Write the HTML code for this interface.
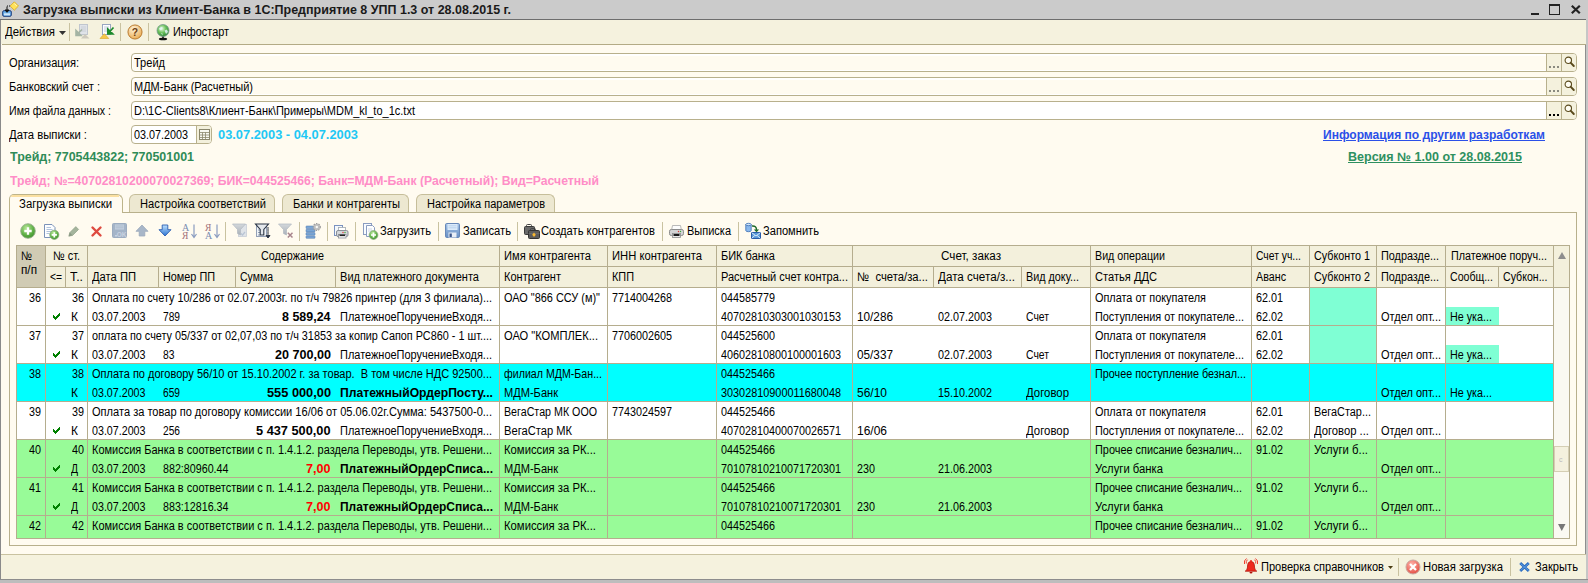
<!DOCTYPE html>
<html><head><meta charset="utf-8"><title>1C</title>
<style>
html,body{margin:0;padding:0;}
body{width:1588px;height:583px;overflow:hidden;position:relative;background:#fffbf0;font-family:"Liberation Sans",sans-serif;font-size:11px;color:#000;}
div{position:absolute;box-sizing:border-box;}
svg{position:absolute;overflow:visible;}
.t{position:absolute;white-space:pre;line-height:15px;height:15px;font-size:12.5px;transform-origin:0 50%;}
</style></head><body>
<div style="left:0px;top:0px;width:1588px;height:20px;background:#cbcbcb;"></div>
<div style="left:0px;top:19px;width:1586px;height:1px;background:#6e6e6e;"></div>
<div style="left:0px;top:20px;width:1px;height:563px;background:#8a8a8a;"></div>
<div style="left:1585px;top:20px;width:3px;height:563px;background:#c6c6c6;"></div>
<div style="left:1585px;top:20px;width:1px;height:560px;background:#8e8e8e;"></div>
<div style="left:0px;top:579px;width:1588px;height:4px;background:#bdbdbd;"></div>
<div style="left:0px;top:579px;width:1588px;height:1px;background:#8d8d8d;"></div>
<span class="t" style="top:2px;left:22.5px;color:#1a1a1a;font-weight:bold;font-size:13.5px;transform:scaleX(0.9245);">Загрузка выписки из Клиент-Банка в 1С:Предприятие 8 УПП 1.3 от 28.08.2015 г.</span>
<div style="left:1531px;top:13px;width:8px;height:2px;background:#222;"></div>
<div style="left:1549px;top:4px;width:11px;height:11px;border:1px solid #222;border-top:2px solid #222;"></div>
<svg style="left:1570px;top:4px" width="11" height="11" viewBox="0 0 11 11"><path d="M1.800 1.800L9.800 9.300M9.800 1.800L1.800 9.300" stroke="#222" stroke-width="2.2" fill="none"/></svg>
<svg style="left:2px;top:1px" width="17" height="17" viewBox="0 0 17 17"><rect x=".7" y="9.700" width="8.600" height="5.600" rx="1.300" fill="#6ab0ec" stroke="#1c3c7c" stroke-width="1"/><rect x="2" y="12.300" width="6" height="2" fill="#cfe6fa"/><path d="M5 5.500v5M3 9l2 2.300L7 9z" stroke="#111" stroke-width="1" fill="#111"/><path d="M5 5h4" stroke="#111" stroke-width="1" stroke-dasharray="1 1"/><path d="M12.300 .8l4.200 4.200-4.200 4.200L8.100 5z" fill="#ffe25a" stroke="#d8a820" stroke-width=".8"/><path d="M12.300 2.500l2.500 2.500" stroke="#fff8c0" stroke-width="1"/></svg>
<div style="left:1px;top:20px;width:1585px;height:24px;background:#f5f2de;"></div>
<div style="left:2px;top:44px;width:1584px;height:1px;background:#b3ab86;"></div>
<span class="t" style="top:25px;left:5px;transform:scaleX(0.9127);">Действия</span>
<svg style="left:59px;top:31px" width="7" height="4"><path d="M0 0h7L3.5 4z" fill="#333"/></svg>
<div style="left:69px;top:23px;width:1px;height:18px;background:#c9c2a0;"></div>
<div style="left:120px;top:23px;width:1px;height:18px;background:#c9c2a0;"></div>
<div style="left:148px;top:23px;width:1px;height:18px;background:#c9c2a0;"></div>
<svg style="left:75px;top:24px" width="17" height="16" viewBox="0 0 17 16"><rect x="4.500" y=".5" width="8" height="10" fill="#dfe3e8" stroke="#c0c6ce"/><path d="M6 3h5M6 5h5M6 7h5" stroke="#c4cad2" stroke-width=".8"/><path d="M7 5.500L2 10.500M1 6.500v5h5z" stroke="#a4b4a4" stroke-width="1.600" fill="#a4b4a4"/><path d="M6 14.500l4-4.500 4.500 4.500z" fill="#cdc9bc"/></svg>
<svg style="left:99px;top:24px" width="17" height="16" viewBox="0 0 17 16"><rect x="3.500" y=".5" width="8" height="10" fill="#fdfeff" stroke="#98a6c0"/><path d="M5 3h5M5 5h5M5 7h3" stroke="#b4c0d4" stroke-width=".8"/><path d="M14.500 3.500L10 8.500M8.800 5v5h5z" stroke="#1c8a2c" stroke-width="1.700" fill="#1c8a2c"/><path d="M1 14.500l4.300-4.800 4.500 4.800z" fill="#f6c84a" stroke="#d8a428" stroke-width=".6"/></svg>
<svg style="left:127px;top:24px" width="16" height="16" viewBox="0 0 17 17"><defs><radialGradient id="qg" cx=".4" cy=".3" r=".8"><stop offset="0" stop-color="#fff3d8"/><stop offset="1" stop-color="#e8a445"/></radialGradient></defs><circle cx="8.5" cy="8.5" r="7.5" fill="url(#qg)" stroke="#b5752a"/><text x="8.5" y="12.500" font-size="11" font-weight="bold" text-anchor="middle" fill="#6b3d10" font-family="Liberation Sans">?</text></svg>
<svg style="left:156px;top:24px" width="14" height="17" viewBox="0 0 14 17"><defs><radialGradient id="gl" cx=".4" cy=".35" r=".7"><stop offset="0" stop-color="#e8f8e0"/><stop offset=".5" stop-color="#68c058"/><stop offset="1" stop-color="#2c8434"/></radialGradient></defs><ellipse cx="7" cy="15" rx="4.200" ry="1.300" fill="#111"/><path d="M7 12v3" stroke="#111" stroke-width="1.500"/><circle cx="7" cy="6.500" r="6" fill="url(#gl)" stroke="#7a9a90" stroke-width=".8"/><path d="M3 4.500q1.500-2 3.500-1.500l-.5 2.500-2 1zM8.500 6.500l2.500-1 1 2.500-2 2zM5 9l1.500.5v2z" fill="#e4f4fc" opacity=".85"/></svg>
<span class="t" style="top:25px;left:173px;transform:scaleX(0.8705);">Инфостарт</span>
<div style="left:131px;top:53px;width:1446px;height:19px;background:#fffbf0;border:1px solid #b8b08c;border-radius:4px;box-shadow:inset 0 0 0 1px #fff,inset 0 2px 0 0 #fff;"></div>
<span class="t" style="top:56px;left:134px;transform:scaleX(0.8826);">Трейд</span>
<span class="t" style="top:56px;left:9px;transform:scaleX(0.8875);">Организация:</span>
<div style="left:1547px;top:54px;width:29px;height:17px;background:#f4f1dd;border-radius:0 3px 3px 0;"></div>
<div style="left:1546px;top:54px;width:1px;height:17px;background:#b8b08c;"></div>
<div style="left:1561px;top:54px;width:1px;height:17px;background:#b8b08c;"></div>
<div style="left:1549px;top:66px;width:2px;height:2px;background:#8a8a80;"></div>
<div style="left:1553px;top:66px;width:2px;height:2px;background:#8a8a80;"></div>
<div style="left:1557px;top:66px;width:2px;height:2px;background:#8a8a80;"></div>
<svg style="left:1564px;top:56px" width="11" height="12" viewBox="0 0 11 12"><circle cx="4.300" cy="4.300" r="3.200" fill="#fffef4" stroke="#5a4a1c" stroke-width="1.100"/><path d="M6.800 6.800l3 3.200" stroke="#5a4a1c" stroke-width="1.900" stroke-linecap="round"/></svg>
<div style="left:131px;top:77px;width:1446px;height:19px;background:#fffbf0;border:1px solid #b8b08c;border-radius:4px;box-shadow:inset 0 0 0 1px #fff,inset 0 2px 0 0 #fff;"></div>
<span class="t" style="top:80px;left:134px;transform:scaleX(0.8787);">МДМ-Банк (Расчетный)</span>
<span class="t" style="top:80px;left:9px;transform:scaleX(0.8912);">Банковский счет :</span>
<div style="left:1547px;top:78px;width:29px;height:17px;background:#f4f1dd;border-radius:0 3px 3px 0;"></div>
<div style="left:1546px;top:78px;width:1px;height:17px;background:#b8b08c;"></div>
<div style="left:1561px;top:78px;width:1px;height:17px;background:#b8b08c;"></div>
<div style="left:1549px;top:90px;width:2px;height:2px;background:#8a8a80;"></div>
<div style="left:1553px;top:90px;width:2px;height:2px;background:#8a8a80;"></div>
<div style="left:1557px;top:90px;width:2px;height:2px;background:#8a8a80;"></div>
<svg style="left:1564px;top:80px" width="11" height="12" viewBox="0 0 11 12"><circle cx="4.300" cy="4.300" r="3.200" fill="#fffef4" stroke="#5a4a1c" stroke-width="1.100"/><path d="M6.800 6.800l3 3.200" stroke="#5a4a1c" stroke-width="1.900" stroke-linecap="round"/></svg>
<div style="left:131px;top:101px;width:1446px;height:19px;background:#fff;border:1px solid #b8b08c;border-radius:4px;box-shadow:inset 0 0 0 1px #fff,inset 0 2px 0 0 #fff;"></div>
<span class="t" style="top:104px;left:134px;transform:scaleX(0.8810);">D:\1C-Clients8\Клиент-Банк\Примеры\MDM_kl_to_1c.txt</span>
<span class="t" style="top:104px;left:9px;transform:scaleX(0.8500);">Имя файла данных :</span>
<div style="left:1547px;top:102px;width:29px;height:17px;background:#f4f1dd;border-radius:0 3px 3px 0;"></div>
<div style="left:1546px;top:102px;width:1px;height:17px;background:#b8b08c;"></div>
<div style="left:1561px;top:102px;width:1px;height:17px;background:#b8b08c;"></div>
<div style="left:1549px;top:114px;width:2px;height:2px;background:#000;"></div>
<div style="left:1553px;top:114px;width:2px;height:2px;background:#000;"></div>
<div style="left:1557px;top:114px;width:2px;height:2px;background:#000;"></div>
<svg style="left:1564px;top:104px" width="11" height="12" viewBox="0 0 11 12"><circle cx="4.300" cy="4.300" r="3.200" fill="#fffef4" stroke="#5a4a1c" stroke-width="1.100"/><path d="M6.800 6.800l3 3.200" stroke="#5a4a1c" stroke-width="1.900" stroke-linecap="round"/></svg>
<div style="left:131px;top:125px;width:81px;height:19px;background:#fff;border:1px solid #b8b08c;border-radius:4px;box-shadow:inset 0 0 0 1px #fff,inset 0 2px 0 0 #fff;"></div>
<span class="t" style="top:128px;left:134px;transform:scaleX(0.8631);">03.07.2003</span>
<span class="t" style="top:128px;left:9px;transform:scaleX(0.9050);">Дата выписки :</span>
<div style="left:196px;top:126px;width:1px;height:17px;background:#b8b08c;"></div>
<div style="left:197px;top:126px;width:14px;height:17px;background:#f3f0dc;border-radius:0 3px 3px 0;"></div>
<svg style="left:199px;top:129px" width="11" height="11" viewBox="0 0 11 11"><rect x=".5" y=".5" width="10" height="10" fill="#f8f8f0" stroke="#8a866c"/><path d="M.5 3.500h10M.5 6h10M.5 8.500h10M3.500 3.500v7M6.500 3.500v7" stroke="#8a866c" stroke-width=".8"/></svg>
<span class="t" style="top:127px;left:218px;color:#1ec8f5;font-weight:bold;font-size:13px;transform:scaleX(0.9881);">03.07.2003 - 04.07.2003</span>
<span class="t" style="top:150px;left:10px;color:#2e8b57;font-weight:bold;font-size:12px;transform:scaleX(1.0375);">Трейд; 7705443822; 770501001</span>
<span class="t" style="top:173.7px;left:10px;color:#ff8dc7;font-weight:bold;font-size:12px;transform:scaleX(1.0163);height:13.500px;overflow:hidden;">Трейд; №=40702810200070027369; БИК=044525466; Банк=МДМ-Банк (Расчетный); Вид=Расчетный</span>
<span class="t" style="top:128px;left:1323px;color:#2b50e8;font-weight:bold;font-size:12px;text-decoration:underline;transform:scaleX(1.0038);">Информация по другим разработкам</span>
<span class="t" style="top:150px;left:1348px;color:#2e9060;font-weight:bold;font-size:12px;text-decoration:underline;transform:scaleX(1.0434);">Версия № 1.00 от 28.08.2015</span>
<div style="left:9px;top:212px;width:1568px;height:334px;border:1px solid #b8b08c;"></div>
<div style="left:129px;top:194px;width:146px;height:18px;background:#ede8d1;border:1px solid #c6be9a;border-bottom:none;border-radius:6px 6px 0 0;"></div>
<span class="t" style="top:197px;left:139.5px;transform:scaleX(0.8875);">Настройка соответствий</span>
<div style="left:282px;top:194px;width:127px;height:18px;background:#ede8d1;border:1px solid #c6be9a;border-bottom:none;border-radius:6px 6px 0 0;"></div>
<span class="t" style="top:197px;left:292.5px;transform:scaleX(0.8888);">Банки и контрагенты</span>
<div style="left:416px;top:194px;width:139px;height:18px;background:#ede8d1;border:1px solid #c6be9a;border-bottom:none;border-radius:6px 6px 0 0;"></div>
<span class="t" style="top:197px;left:426.5px;transform:scaleX(0.8803);">Настройка параметров</span>
<div style="left:9px;top:194px;width:114px;height:19px;background:#fffbf0;border:1px solid #bdb48a;border-bottom:none;border-radius:5px 6px 0 0;"></div>
<div style="left:11px;top:195px;width:108px;height:2px;background:#fbe0a2;border-radius:3px 0 0 0;"></div>
<span class="t" style="top:197px;left:19px;transform:scaleX(0.9108);">Загрузка выписки</span>
<div style="left:225px;top:222px;width:1px;height:19px;background:#c9c2a0;"></div>
<div style="left:299px;top:222px;width:1px;height:19px;background:#c9c2a0;"></div>
<div style="left:327px;top:222px;width:1px;height:19px;background:#c9c2a0;"></div>
<div style="left:355px;top:222px;width:1px;height:19px;background:#c9c2a0;"></div>
<div style="left:438px;top:222px;width:1px;height:19px;background:#c9c2a0;"></div>
<div style="left:517px;top:222px;width:1px;height:19px;background:#c9c2a0;"></div>
<div style="left:662px;top:222px;width:1px;height:19px;background:#c9c2a0;"></div>
<div style="left:738px;top:222px;width:1px;height:19px;background:#c9c2a0;"></div>
<svg width="0" height="0" style="left:0;top:0"><defs><radialGradient id="gg" cx=".4" cy=".3" r=".8"><stop offset="0" stop-color="#b8e898"/><stop offset=".6" stop-color="#5cae44"/><stop offset="1" stop-color="#3a8a2a"/></radialGradient><linearGradient id="bd" x1="0" y1="0" x2="0" y2="1"><stop offset="0" stop-color="#bfe2ff"/><stop offset="1" stop-color="#2a72d0"/></linearGradient><linearGradient id="fl" x1="0" y1="0" x2="0" y2="1"><stop offset="0" stop-color="#a4c2e6"/><stop offset="1" stop-color="#6890c4"/></linearGradient><linearGradient id="gr" x1="0" y1="0" x2="0" y2="1"><stop offset="0" stop-color="#d4d8dc"/><stop offset="1" stop-color="#a8b0b8"/></linearGradient></defs></svg>
<svg style="left:20px;top:223px" width="16" height="16" viewBox="0 0 16 16"><circle cx="8" cy="8" r="7.300" fill="url(#gg)" stroke="#9ab090" stroke-width=".9"/><path d="M8 4.300v7.400M4.300 8h7.400" stroke="#fff" stroke-width="2.300"/></svg>
<svg style="left:43px;top:223px" width="17" height="17" viewBox="0 0 17 17"><path d="M1.500 1.500h7.500l3 3v10h-10.500z" fill="#fdfeff" stroke="#7b92b8"/><path d="M3.500 4.500h4.500M3.500 6.500h6M3.500 8.500h6M3.500 10.500h3" stroke="#a8bcd8" stroke-width=".9"/><circle cx="11.300" cy="11.800" r="4.600" fill="url(#gg)" stroke="#8aa880" stroke-width=".7"/><path d="M11.300 9.200v5.200M8.700 11.800h5.200" stroke="#fff" stroke-width="1.700"/></svg>
<svg style="left:68px;top:225px" width="12" height="12" viewBox="0 0 12 12"><path d="M.8 11.200l1-3.600 6-6 2.800 2.800-6 6z" fill="#a4b49c" stroke="#94a48c" stroke-width=".7"/><path d="M.8 11.200l1-3.600 2.600 2.600z" fill="#8a9a84"/></svg>
<svg style="left:91px;top:226px" width="11" height="11" viewBox="0 0 11 11"><path d="M1.500 1.500l8 8M9.500 1.500l-8 8" stroke="#de4a40" stroke-width="2.400" stroke-linecap="round"/></svg>
<svg style="left:112px;top:223px" width="15" height="15" viewBox="0 0 15 15"><rect x=".5" y=".5" width="14" height="14" rx="1" fill="#a4b4c8" stroke="#9cacc0"/><rect x="3" y="1.500" width="9" height="5" fill="#c4d0de"/><path d="M3.500 3h8M3.500 4.800h8" stroke="#a4b4c8" stroke-width=".7"/><text x="9.500" y="13.500" font-size="6.500" font-weight="bold" text-anchor="middle" fill="#c8d2e0" font-family="Liberation Sans">OK</text><rect x="3" y="12" width="2" height="1.500" fill="#c8d2e0"/></svg>
<svg style="left:135px;top:224px" width="14" height="13" viewBox="0 0 14 13"><path d="M7 1l6 6.300H9.800v4.700H4.200V7.300H1z" fill="#a8b6c8" stroke="#9caabc" stroke-width=".8"/></svg>
<svg style="left:158px;top:224px" width="14" height="13" viewBox="0 0 14 13"><path d="M7 12l6-6.300H9.800V1H4.200v4.700H1z" fill="url(#bd)" stroke="#2a5cb0" stroke-width=".9"/></svg>
<svg style="left:182px;top:222px" width="17" height="18" viewBox="0 0 17 18"><text x="0" y="8.500" font-size="10" fill="#7a8cb0" font-family="Liberation Serif">A</text><text x="0" y="17" font-size="9.500" fill="#a07078" font-family="Liberation Serif">Я</text><path d="M12 2.500v12.500M9.500 12l2.500 3.500 2.500-3.500" stroke="#8a9cc0" stroke-width="1.200" fill="none"/></svg>
<svg style="left:205px;top:222px" width="17" height="18" viewBox="0 0 17 18"><text x="0" y="8.500" font-size="9.500" fill="#a07078" font-family="Liberation Serif">Я</text><text x="0" y="17" font-size="10" fill="#7a8cb0" font-family="Liberation Serif">A</text><path d="M12 2.500v12.500M9.500 12l2.500 3.500 2.500-3.500" stroke="#8a9cc0" stroke-width="1.200" fill="none"/></svg>
<svg style="left:232px;top:223px" width="16" height="16" viewBox="0 0 16 16"><rect x="6.500" y="1.500" width="8" height="12" fill="#dfe3e8" stroke="#c8ced6" stroke-width=".8"/><path d="M9 10.500l1.500 1.500 2.500-3" stroke="#b8c4d4" stroke-width="1.200" fill="none"/><path d="M.5 1h13L8.500 6.500v5.500l-3-1.500V6.500z" fill="url(#gr)" stroke="#b0b8c0" stroke-width=".7"/></svg>
<svg style="left:255px;top:223px" width="16" height="17" viewBox="0 0 16 17"><rect x="1.500" y="2.500" width="10" height="11" fill="#f0f4f8" stroke="#7a8aa8" stroke-width=".8"/><path d="M3 7h2M3 9.500h2M3 12h2" stroke="#7a8aa8" stroke-width=".8"/><path d="M.5 1h13L8.800 6.500v5.500h-3.600V6.500z" fill="#e4e8ec" stroke="#2a3444" stroke-width="1.100"/><path d="M13 4v10.500M11 12.500l2 2.500 2-2.500z" stroke="#2a3444" stroke-width="1" fill="#2a3444" stroke-dasharray="1.500 0"/></svg>
<svg style="left:278px;top:223px" width="16" height="16" viewBox="0 0 16 16"><path d="M.5 1h13L8.500 6.500v5.500l-3-1.500V6.500z" fill="url(#gr)" stroke="#b0b8c0" stroke-width=".7"/><path d="M9.800 9.800l4.700 4.700M14.500 9.800l-4.700 4.700" stroke="#a8848c" stroke-width="1.500"/></svg>
<svg style="left:305px;top:222px" width="17" height="17" viewBox="0 0 17 17"><rect x="1" y="4" width="9" height="2.600" rx=".6" fill="#7aa6d6" stroke="#4a74ac" stroke-width=".5"/><rect x="1" y="7.300" width="9" height="2.600" rx=".6" fill="#7aa6d6" stroke="#4a74ac" stroke-width=".5"/><rect x="1" y="10.600" width="9" height="2.600" rx=".6" fill="#7aa6d6" stroke="#4a74ac" stroke-width=".5"/><rect x="1" y="13.900" width="9" height="2.400" rx=".6" fill="#7aa6d6" stroke="#4a74ac" stroke-width=".5"/><circle cx="11.800" cy="5" r="3.300" fill="#bcbcbc" stroke="#9a9a9a" stroke-width="1.600" stroke-dasharray="1.300 1.100"/><circle cx="11.800" cy="5" r="3" fill="#bebebe"/><circle cx="11.800" cy="5" r="1.200" fill="#f8f8f4"/></svg>
<svg style="left:333px;top:224px" width="16" height="16" viewBox="0 0 16 16"><rect x="1.500" y="1.500" width="8" height="10" fill="#f4f8fc" stroke="#7a92c0"/><rect x="5.500" y="3.500" width="7" height="4" fill="#fff" stroke="#a0a8b0" stroke-width=".8"/><rect x="3.500" y="6.500" width="11.500" height="6" rx="1.500" fill="#d4d6da" stroke="#8a9098"/><circle cx="12" cy="8.500" r=".7" fill="#3a3"/><circle cx="10" cy="8.500" r=".7" fill="#d33"/><rect x="5.500" y="10.500" width="7.500" height="3.500" fill="#f8f8f8" stroke="#8a9098" stroke-width=".8"/><rect x="6.500" y="10.500" width="5.500" height="1.600" fill="#222"/></svg>
<svg style="left:362px;top:222px" width="17" height="18" viewBox="0 0 17 18"><rect x="1.500" y="1.500" width="8" height="11" fill="#f8fbff" stroke="#8a9cc0"/><path d="M4.500 3.500h6l2 2v9h-8z" fill="#fdfeff" stroke="#8a9cc0"/><path d="M6 7h4M6 9h4" stroke="#c0cce0" stroke-width=".8"/><circle cx="11.500" cy="13" r="4.400" fill="url(#gg)" stroke="#8aa880" stroke-width=".7"/><path d="M11.500 10.500v5M9 13h5" stroke="#fff" stroke-width="1.700"/></svg>
<svg style="left:445px;top:223px" width="15" height="15" viewBox="0 0 15 15"><rect x=".5" y=".5" width="14" height="14" rx="1.200" fill="url(#fl)" stroke="#6888b8"/><rect x="2.500" y="1" width="10" height="6" fill="#dcebfa"/><path d="M3.500 2.800h8M3.500 4.800h8" stroke="#b0cbe8" stroke-width=".8"/><rect x="3.500" y="9.500" width="8" height="5" fill="#e8eef6"/><rect x="4.500" y="10.500" width="2.300" height="3.500" fill="#3a5488"/></svg>
<svg style="left:524px;top:223px" width="16" height="17" viewBox="0 0 16 17"><rect x="2.500" y="1.500" width="5" height="3" rx="1" fill="none" stroke="#444" stroke-width="1"/><rect x=".5" y="3.500" width="10" height="8" rx="1" fill="#6a6a6a" stroke="#3a3a3a"/><rect x="6.500" y="5.500" width="5" height="3" rx="1" fill="none" stroke="#444" stroke-width="1"/><rect x="4.500" y="7.500" width="11" height="8" rx="1" fill="#5c5c5c" stroke="#333"/><path d="M4.500 10.500h11" stroke="#777" stroke-width=".6"/><path d="M10 9.500l1.800 2.300-1.800 2.300-1.800-2.300z" fill="#f8b830"/></svg>
<svg style="left:669px;top:224px" width="15" height="15" viewBox="0 0 15 15"><path d="M3.500 1.500h8l.8 4h-9.600z" fill="#fdfdfd" stroke="#a8a8a8" stroke-width=".8"/><rect x=".5" y="5.500" width="14" height="6" rx="1.800" fill="#d4d4d4" stroke="#8c8c8c"/><circle cx="11.500" cy="7.500" r=".7" fill="#3a3"/><circle cx="9.500" cy="7.500" r=".7" fill="#d33"/><rect x="3.500" y="9.500" width="8" height="4" fill="#e8e8e8" stroke="#8c8c8c" stroke-width=".8"/><rect x="4.500" y="10" width="6" height="2" fill="#1a1a1a"/></svg>
<svg style="left:745px;top:222px" width="16" height="17" viewBox="0 0 16 17"><path d="M.8 2.500v6a2.700 1.200 0 0 0 5.400 0v-6z" fill="#8ab8ec" stroke="#3a6cb0" stroke-width=".8"/><ellipse cx="3.500" cy="2.500" rx="2.700" ry="1.200" fill="#cfe4fa" stroke="#3a6cb0" stroke-width=".8"/><path d="M7 4q4.500-.5 4.500 4" stroke="#1f6a2a" stroke-width="1.500" fill="none"/><path d="M8.800 7.500l2.700 2.800 2.700-2.800z" fill="#1f6a2a"/><rect x="6.500" y="10.500" width="9" height="6" fill="#5a9ad8" stroke="#2a5ca8"/><path d="M6.500 10.500l4.500 3.500 4.500-3.500M6.500 16.500l3.300-3M15.500 16.500l-3.300-3" stroke="#e8f2fc" stroke-width=".9" fill="none"/></svg>
<span class="t" style="top:224px;left:380px;transform:scaleX(0.8935);">Загрузить</span>
<span class="t" style="top:224px;left:463px;transform:scaleX(0.8985);">Записать</span>
<span class="t" style="top:224px;left:541px;transform:scaleX(0.8949);">Создать контрагентов</span>
<span class="t" style="top:224px;left:687px;transform:scaleX(0.8795);">Выписка</span>
<span class="t" style="top:224px;left:763px;transform:scaleX(0.8896);">Запомнить</span>
<div style="left:16px;top:245px;width:1537px;height:293px;background:#fff;"></div>
<div style="left:16px;top:245px;width:1537px;height:43px;background:#f3f0dc;"></div>
<div style="left:16px;top:245px;width:29px;height:43px;background:#d0cbb4;"></div>
<div style="left:17px;top:364px;width:1536px;height:38px;background:#00ffff;"></div>
<div style="left:17px;top:440px;width:1536px;height:38px;background:#98fb98;"></div>
<div style="left:17px;top:478px;width:1536px;height:38px;background:#98fb98;"></div>
<div style="left:17px;top:516px;width:1536px;height:22px;background:#98fb98;"></div>
<div style="left:1310px;top:288px;width:66px;height:38px;background:#7fffd4;"></div>
<div style="left:1446px;top:307px;width:53px;height:19px;background:#7fffd4;"></div>
<div style="left:1310px;top:326px;width:66px;height:38px;background:#7fffd4;"></div>
<div style="left:1446px;top:345px;width:53px;height:19px;background:#7fffd4;"></div>
<div style="left:45px;top:245px;width:1px;height:293px;background:#b5ad8e;"></div>
<div style="left:87px;top:245px;width:1px;height:293px;background:#b5ad8e;"></div>
<div style="left:499px;top:245px;width:1px;height:293px;background:#b5ad8e;"></div>
<div style="left:607px;top:245px;width:1px;height:293px;background:#b5ad8e;"></div>
<div style="left:716px;top:245px;width:1px;height:293px;background:#b5ad8e;"></div>
<div style="left:852px;top:245px;width:1px;height:293px;background:#b5ad8e;"></div>
<div style="left:1090px;top:245px;width:1px;height:293px;background:#b5ad8e;"></div>
<div style="left:1251px;top:245px;width:1px;height:293px;background:#b5ad8e;"></div>
<div style="left:1309px;top:245px;width:1px;height:293px;background:#b5ad8e;"></div>
<div style="left:1376px;top:245px;width:1px;height:293px;background:#b5ad8e;"></div>
<div style="left:1445px;top:245px;width:1px;height:293px;background:#b5ad8e;"></div>
<div style="left:1553px;top:245px;width:1px;height:293px;background:#b5ad8e;"></div>
<div style="left:16px;top:287px;width:1537px;height:1px;background:#b5ad8e;"></div>
<div style="left:16px;top:325px;width:1537px;height:1px;background:#b5ad8e;"></div>
<div style="left:16px;top:363px;width:1537px;height:1px;background:#b5ad8e;"></div>
<div style="left:16px;top:401px;width:1537px;height:1px;background:#b5ad8e;"></div>
<div style="left:16px;top:439px;width:1537px;height:1px;background:#b5ad8e;"></div>
<div style="left:16px;top:477px;width:1537px;height:1px;background:#b5ad8e;"></div>
<div style="left:16px;top:515px;width:1537px;height:1px;background:#b5ad8e;"></div>
<div style="left:45px;top:266px;width:1508px;height:1px;background:#b5ad8e;"></div>
<div style="left:17px;top:246px;width:28px;height:41px;background:#d0cbb4;"></div>
<div style="left:65px;top:267px;width:1px;height:20px;background:#b5ad8e;"></div>
<div style="left:158px;top:267px;width:1px;height:20px;background:#b5ad8e;"></div>
<div style="left:235px;top:267px;width:1px;height:20px;background:#b5ad8e;"></div>
<div style="left:335px;top:267px;width:1px;height:20px;background:#b5ad8e;"></div>
<div style="left:933px;top:267px;width:1px;height:20px;background:#b5ad8e;"></div>
<div style="left:1021px;top:267px;width:1px;height:20px;background:#b5ad8e;"></div>
<div style="left:1498px;top:267px;width:1px;height:20px;background:#b5ad8e;"></div>
<div style="left:16px;top:245px;width:1554px;height:294px;border:1px solid #b5ad8e;"></div>
<div style="left:1554px;top:246px;width:15px;height:292px;background:#faf9f2;"></div>
<div style="left:1554px;top:246px;width:15px;height:42px;background:#f3f0dc;"></div>
<div style="left:1554px;top:287px;width:15px;height:1px;background:#b5ad8e;"></div>
<svg style="left:1557.500px;top:252px" width="8" height="7"><path d="M0 7h8L4 0z" fill="#8d8d8d"/></svg>
<svg style="left:1558px;top:524px" width="7.500" height="7"><path d="M0 0h7.500L3.750 7z" fill="#777"/></svg>
<div style="left:1554px;top:446px;width:15px;height:26px;background:#f4f1de;border:1px solid #d4ceb4;"></div>
<span class="t" style="top:452px;left:1559px;color:#bbb;font-size:8px;transform:scaleX(0.8800);">c</span>
<span class="t" style="top:249px;left:21px;transform:scaleX(0.8196);">№</span>
<span class="t" style="top:263px;left:21px;transform:scaleX(0.9403);">п/п</span>
<span class="t" style="top:249px;left:53px;transform:scaleX(0.8723);">№ ст.</span>
<span class="t" style="top:270px;left:50px;transform:scaleX(0.8214);">&lt;=</span>
<span class="t" style="top:270px;left:70px;transform:scaleX(0.9846);">Т..</span>
<span class="t" style="top:249px;left:261px;transform:scaleX(0.8623);">Содержание</span>
<span class="t" style="top:270px;left:92px;transform:scaleX(0.8957);">Дата ПП</span>
<span class="t" style="top:270px;left:163px;transform:scaleX(0.8678);">Номер ПП</span>
<span class="t" style="top:270px;left:239.5px;transform:scaleX(0.8401);">Сумма</span>
<span class="t" style="top:270px;left:340px;transform:scaleX(0.8847);">Вид платежного документа</span>
<span class="t" style="top:270px;left:504px;transform:scaleX(0.8818);">Контрагент</span>
<span class="t" style="top:270px;left:612px;transform:scaleX(0.8707);">КПП</span>
<span class="t" style="top:270px;left:721px;transform:scaleX(0.8820);">Расчетный счет контра...</span>
<span class="t" style="top:270px;left:857px;transform:scaleX(0.9028);">№  счета/за...</span>
<span class="t" style="top:270px;left:938px;transform:scaleX(0.9335);">Дата счета/з...</span>
<span class="t" style="top:270px;left:1026px;transform:scaleX(0.8638);">Вид доку...</span>
<span class="t" style="top:270px;left:1095px;transform:scaleX(0.8891);">Статья ДДС</span>
<span class="t" style="top:270px;left:1256px;transform:scaleX(0.8583);">Аванс</span>
<span class="t" style="top:270px;left:1314px;transform:scaleX(0.8613);">Субконто 2</span>
<span class="t" style="top:270px;left:1381px;transform:scaleX(0.8677);">Подразде...</span>
<span class="t" style="top:270px;left:1450px;transform:scaleX(0.8465);">Сообщ...</span>
<span class="t" style="top:270px;left:1502.5px;transform:scaleX(0.8481);">Субкон...</span>
<span class="t" style="top:249px;left:504px;transform:scaleX(0.8915);">Имя контрагента</span>
<span class="t" style="top:249px;left:612px;transform:scaleX(0.8975);">ИНН контрагента</span>
<span class="t" style="top:249px;left:721px;transform:scaleX(0.8798);">БИК банка</span>
<span class="t" style="top:249px;left:1095px;transform:scaleX(0.8558);">Вид операции</span>
<span class="t" style="top:249px;left:1256px;transform:scaleX(0.8283);">Счет уч...</span>
<span class="t" style="top:249px;left:1314px;transform:scaleX(0.8613);">Субконто 1</span>
<span class="t" style="top:249px;left:1381px;transform:scaleX(0.8677);">Подразде...</span>
<span class="t" style="top:249px;left:1451px;transform:scaleX(0.8593);">Платежное поруч...</span>
<span class="t" style="top:249px;left:941px;transform:scaleX(0.9345);">Счет, заказ</span>
<span class="t" style="top:291px;left:28.5px;transform:scaleX(0.8629);">36</span>
<span class="t" style="top:291px;left:71.5px;transform:scaleX(0.8629);">36</span>
<span class="t" style="top:291px;left:92px;transform:scaleX(0.8687);">Оплата по счету 10/286 от 02.07.2003г. по т/ч 79826 принтер (для 3 филиала)...</span>
<span class="t" style="top:291px;left:504px;transform:scaleX(0.8736);">ОАО &quot;866 ССУ (м)&quot;</span>
<span class="t" style="top:291px;left:612px;transform:scaleX(0.8629);">7714004268</span>
<span class="t" style="top:291px;left:721px;transform:scaleX(0.8629);">044585779</span>
<span class="t" style="top:291px;left:1095px;transform:scaleX(0.8702);">Оплата от покупателя</span>
<span class="t" style="top:291px;left:1256px;transform:scaleX(0.8631);">62.01</span>
<svg style="left:53px;top:313px" width="7" height="7" viewBox="0 0 7 7" shape-rendering="crispEdges"><path d="M6 0h1v3h-1zM5 1h1v3h-1zM4 2h1v3h-1zM3 3h1v3h-1zM2 4h1v3h-1zM1 3h1v3h-1zM0 2h1v3h-1z" fill="#008000"/></svg>
<span class="t" style="top:310px;left:71px;transform:scaleX(0.9593);">К</span>
<span class="t" style="top:310px;left:92px;transform:scaleX(0.8551);">03.07.2003</span>
<span class="t" style="top:310px;left:163px;transform:scaleX(0.8150);">789</span>
<span class="t" style="top:310px;left:282.0px;font-weight:bold;transform:scaleX(0.9965);">8 589,24</span>
<span class="t" style="top:310px;left:340px;transform:scaleX(0.8771);">ПлатежноеПоручениеВходя...</span>
<span class="t" style="top:310px;left:721px;transform:scaleX(0.8630);">40702810303001030153</span>
<span class="t" style="top:310px;left:857px;transform:scaleX(0.9416);">10/286</span>
<span class="t" style="top:310px;left:938px;transform:scaleX(0.8631);">02.07.2003</span>
<span class="t" style="top:310px;left:1026px;transform:scaleX(0.8312);">Счет</span>
<span class="t" style="top:310px;left:1095px;transform:scaleX(0.8706);">Поступления от покупателе...</span>
<span class="t" style="top:310px;left:1256px;transform:scaleX(0.8631);">62.02</span>
<span class="t" style="top:310px;left:1380.5px;transform:scaleX(0.8809);">Отдел опт...</span>
<span class="t" style="top:310px;left:1450px;transform:scaleX(0.8602);">Не ука...</span>
<span class="t" style="top:329px;left:28.5px;transform:scaleX(0.8629);">37</span>
<span class="t" style="top:329px;left:71.5px;transform:scaleX(0.8629);">37</span>
<span class="t" style="top:329px;left:92px;transform:scaleX(0.8680);">оплата по счету 05/337 от 02,07,03 по т/ч 31853 за копир Сапоп РС860 - 1 шт....</span>
<span class="t" style="top:329px;left:504px;transform:scaleX(0.8897);">ОАО &quot;КОМПЛЕК...</span>
<span class="t" style="top:329px;left:612px;transform:scaleX(0.8629);">7706002605</span>
<span class="t" style="top:329px;left:721px;transform:scaleX(0.8629);">044525600</span>
<span class="t" style="top:329px;left:1095px;transform:scaleX(0.8702);">Оплата от покупателя</span>
<span class="t" style="top:329px;left:1256px;transform:scaleX(0.8631);">62.01</span>
<svg style="left:53px;top:351px" width="7" height="7" viewBox="0 0 7 7" shape-rendering="crispEdges"><path d="M6 0h1v3h-1zM5 1h1v3h-1zM4 2h1v3h-1zM3 3h1v3h-1zM2 4h1v3h-1zM1 3h1v3h-1zM0 2h1v3h-1z" fill="#008000"/></svg>
<span class="t" style="top:348px;left:71px;transform:scaleX(0.9593);">К</span>
<span class="t" style="top:348px;left:92px;transform:scaleX(0.8551);">03.07.2003</span>
<span class="t" style="top:348px;left:163px;transform:scaleX(0.8270);">83</span>
<span class="t" style="top:348px;left:274.5px;font-weight:bold;transform:scaleX(1.0070);">20 700,00</span>
<span class="t" style="top:348px;left:340px;transform:scaleX(0.8771);">ПлатежноеПоручениеВходя...</span>
<span class="t" style="top:348px;left:721px;transform:scaleX(0.8630);">40602810800100001603</span>
<span class="t" style="top:348px;left:857px;transform:scaleX(0.9416);">05/337</span>
<span class="t" style="top:348px;left:938px;transform:scaleX(0.8631);">02.07.2003</span>
<span class="t" style="top:348px;left:1026px;transform:scaleX(0.8312);">Счет</span>
<span class="t" style="top:348px;left:1095px;transform:scaleX(0.8706);">Поступления от покупателе...</span>
<span class="t" style="top:348px;left:1256px;transform:scaleX(0.8631);">62.02</span>
<span class="t" style="top:348px;left:1380.5px;transform:scaleX(0.8809);">Отдел опт...</span>
<span class="t" style="top:348px;left:1450px;transform:scaleX(0.8602);">Не ука...</span>
<span class="t" style="top:367px;left:28.5px;transform:scaleX(0.8629);">38</span>
<span class="t" style="top:367px;left:71.5px;transform:scaleX(0.8629);">38</span>
<span class="t" style="top:367px;left:92px;transform:scaleX(0.8804);">Оплата по договору 56/10 от 15.10.2002 г. за товар.  В том числе НДС 92500...</span>
<span class="t" style="top:367px;left:504px;transform:scaleX(0.8507);">филиал МДМ-Бан...</span>
<span class="t" style="top:367px;left:721px;transform:scaleX(0.8629);">044525466</span>
<span class="t" style="top:367px;left:1095px;transform:scaleX(0.8632);">Прочее поступление безнал...</span>
<span class="t" style="top:386px;left:71px;transform:scaleX(0.9593);">К</span>
<span class="t" style="top:386px;left:92px;transform:scaleX(0.8551);">03.07.2003</span>
<span class="t" style="top:386px;left:163px;transform:scaleX(0.8150);">659</span>
<span class="t" style="top:386px;left:266.5px;font-weight:bold;transform:scaleX(1.0230);">555 000,00</span>
<span class="t" style="top:386px;left:340px;font-weight:bold;transform:scaleX(0.9730);">ПлатежныйОрдерПосту...</span>
<span class="t" style="top:386px;left:504px;transform:scaleX(0.8855);">МДМ-Банк</span>
<span class="t" style="top:386px;left:721px;transform:scaleX(0.8688);">30302810900011680048</span>
<span class="t" style="top:386px;left:857px;transform:scaleX(0.9590);">56/10</span>
<span class="t" style="top:386px;left:938px;transform:scaleX(0.8631);">15.10.2002</span>
<span class="t" style="top:386px;left:1026px;transform:scaleX(0.9110);">Договор</span>
<span class="t" style="top:386px;left:1380.5px;transform:scaleX(0.8809);">Отдел опт...</span>
<span class="t" style="top:386px;left:1450px;transform:scaleX(0.8602);">Не ука...</span>
<span class="t" style="top:405px;left:28.5px;transform:scaleX(0.8629);">39</span>
<span class="t" style="top:405px;left:71.5px;transform:scaleX(0.8629);">39</span>
<span class="t" style="top:405px;left:92px;transform:scaleX(0.8850);">Оплата за товар по договору комиссии 16/06 от 05.06.02г.Сумма: 5437500-0...</span>
<span class="t" style="top:405px;left:504px;transform:scaleX(0.8543);">ВегаСтар МК ООО</span>
<span class="t" style="top:405px;left:612px;transform:scaleX(0.8629);">7743024597</span>
<span class="t" style="top:405px;left:721px;transform:scaleX(0.8629);">044525466</span>
<span class="t" style="top:405px;left:1095px;transform:scaleX(0.8702);">Оплата от покупателя</span>
<span class="t" style="top:405px;left:1256px;transform:scaleX(0.8631);">62.01</span>
<span class="t" style="top:405px;left:1314px;transform:scaleX(0.8706);">ВегаСтар...</span>
<svg style="left:53px;top:427px" width="7" height="7" viewBox="0 0 7 7" shape-rendering="crispEdges"><path d="M6 0h1v3h-1zM5 1h1v3h-1zM4 2h1v3h-1zM3 3h1v3h-1zM2 4h1v3h-1zM1 3h1v3h-1zM0 2h1v3h-1z" fill="#008000"/></svg>
<span class="t" style="top:424px;left:71px;transform:scaleX(0.9593);">К</span>
<span class="t" style="top:424px;left:92px;transform:scaleX(0.8551);">03.07.2003</span>
<span class="t" style="top:424px;left:163px;transform:scaleX(0.8150);">256</span>
<span class="t" style="top:424px;left:256.0px;font-weight:bold;transform:scaleX(1.0205);">5 437 500,00</span>
<span class="t" style="top:424px;left:340px;transform:scaleX(0.8771);">ПлатежноеПоручениеВходя...</span>
<span class="t" style="top:424px;left:504px;transform:scaleX(0.8922);">ВегаСтар МК</span>
<span class="t" style="top:424px;left:721px;transform:scaleX(0.8630);">40702810400070026571</span>
<span class="t" style="top:424px;left:857px;transform:scaleX(0.9590);">16/06</span>
<span class="t" style="top:424px;left:1026px;transform:scaleX(0.9110);">Договор</span>
<span class="t" style="top:424px;left:1095px;transform:scaleX(0.8706);">Поступления от покупателе...</span>
<span class="t" style="top:424px;left:1256px;transform:scaleX(0.8631);">62.02</span>
<span class="t" style="top:424px;left:1314px;transform:scaleX(0.9003);">Договор ...</span>
<span class="t" style="top:424px;left:1380.5px;transform:scaleX(0.8809);">Отдел опт...</span>
<span class="t" style="top:443px;left:28.5px;transform:scaleX(0.8629);">40</span>
<span class="t" style="top:443px;left:71.5px;transform:scaleX(0.8629);">40</span>
<span class="t" style="top:443px;left:92px;transform:scaleX(0.8782);">Комиссия Банка в соответствии с п. 1.4.1.2. раздела Переводы, утв. Решени...</span>
<span class="t" style="top:443px;left:504px;transform:scaleX(0.9043);">Комиссия за РК...</span>
<span class="t" style="top:443px;left:721px;transform:scaleX(0.8629);">044525466</span>
<span class="t" style="top:443px;left:1095px;transform:scaleX(0.8723);">Прочее списание безналич...</span>
<span class="t" style="top:443px;left:1256px;transform:scaleX(0.8631);">91.02</span>
<span class="t" style="top:443px;left:1314px;transform:scaleX(0.9076);">Услуги б...</span>
<svg style="left:53px;top:465px" width="7" height="7" viewBox="0 0 7 7" shape-rendering="crispEdges"><path d="M6 0h1v3h-1zM5 1h1v3h-1zM4 2h1v3h-1zM3 3h1v3h-1zM2 4h1v3h-1zM1 3h1v3h-1zM0 2h1v3h-1z" fill="#008000"/></svg>
<span class="t" style="top:462px;left:71px;transform:scaleX(0.8266);">Д</span>
<span class="t" style="top:462px;left:92px;transform:scaleX(0.8551);">03.07.2003</span>
<span class="t" style="top:462px;left:163px;transform:scaleX(0.8566);">882:80960.44</span>
<span class="t" style="top:462px;left:306.0px;color:#f00;font-weight:bold;transform:scaleX(1.0064);">7,00</span>
<span class="t" style="top:462px;left:340px;font-weight:bold;transform:scaleX(0.9570);">ПлатежныйОрдерСписа...</span>
<span class="t" style="top:462px;left:504px;transform:scaleX(0.8855);">МДМ-Банк</span>
<span class="t" style="top:462px;left:721px;transform:scaleX(0.8630);">70107810210071720301</span>
<span class="t" style="top:462px;left:857px;transform:scaleX(0.8629);">230</span>
<span class="t" style="top:462px;left:938px;transform:scaleX(0.8631);">21.06.2003</span>
<span class="t" style="top:462px;left:1095px;transform:scaleX(0.9025);">Услуги банка</span>
<span class="t" style="top:462px;left:1380.5px;transform:scaleX(0.8809);">Отдел опт...</span>
<span class="t" style="top:481px;left:28.5px;transform:scaleX(0.8629);">41</span>
<span class="t" style="top:481px;left:71.5px;transform:scaleX(0.8629);">41</span>
<span class="t" style="top:481px;left:92px;transform:scaleX(0.8782);">Комиссия Банка в соответствии с п. 1.4.1.2. раздела Переводы, утв. Решени...</span>
<span class="t" style="top:481px;left:504px;transform:scaleX(0.9043);">Комиссия за РК...</span>
<span class="t" style="top:481px;left:721px;transform:scaleX(0.8629);">044525466</span>
<span class="t" style="top:481px;left:1095px;transform:scaleX(0.8723);">Прочее списание безналич...</span>
<span class="t" style="top:481px;left:1256px;transform:scaleX(0.8631);">91.02</span>
<span class="t" style="top:481px;left:1314px;transform:scaleX(0.9076);">Услуги б...</span>
<svg style="left:53px;top:503px" width="7" height="7" viewBox="0 0 7 7" shape-rendering="crispEdges"><path d="M6 0h1v3h-1zM5 1h1v3h-1zM4 2h1v3h-1zM3 3h1v3h-1zM2 4h1v3h-1zM1 3h1v3h-1zM0 2h1v3h-1z" fill="#008000"/></svg>
<span class="t" style="top:500px;left:71px;transform:scaleX(0.8266);">Д</span>
<span class="t" style="top:500px;left:92px;transform:scaleX(0.8551);">03.07.2003</span>
<span class="t" style="top:500px;left:163px;transform:scaleX(0.8566);">883:12816.34</span>
<span class="t" style="top:500px;left:306.0px;color:#f00;font-weight:bold;transform:scaleX(1.0064);">7,00</span>
<span class="t" style="top:500px;left:340px;font-weight:bold;transform:scaleX(0.9570);">ПлатежныйОрдерСписа...</span>
<span class="t" style="top:500px;left:504px;transform:scaleX(0.8855);">МДМ-Банк</span>
<span class="t" style="top:500px;left:721px;transform:scaleX(0.8630);">70107810210071720301</span>
<span class="t" style="top:500px;left:857px;transform:scaleX(0.8629);">230</span>
<span class="t" style="top:500px;left:938px;transform:scaleX(0.8631);">21.06.2003</span>
<span class="t" style="top:500px;left:1095px;transform:scaleX(0.9025);">Услуги банка</span>
<span class="t" style="top:500px;left:1380.5px;transform:scaleX(0.8809);">Отдел опт...</span>
<span class="t" style="top:519px;left:28.5px;transform:scaleX(0.8629);">42</span>
<span class="t" style="top:519px;left:71.5px;transform:scaleX(0.8629);">42</span>
<span class="t" style="top:519px;left:92px;transform:scaleX(0.8782);">Комиссия Банка в соответствии с п. 1.4.1.2. раздела Переводы, утв. Решени...</span>
<span class="t" style="top:519px;left:504px;transform:scaleX(0.9043);">Комиссия за РК...</span>
<span class="t" style="top:519px;left:721px;transform:scaleX(0.8629);">044525466</span>
<span class="t" style="top:519px;left:1095px;transform:scaleX(0.8723);">Прочее списание безналич...</span>
<span class="t" style="top:519px;left:1256px;transform:scaleX(0.8631);">91.02</span>
<span class="t" style="top:519px;left:1314px;transform:scaleX(0.9076);">Услуги б...</span>
<div style="left:1px;top:555px;width:1585px;height:24px;background:#f5f2de;"></div>
<div style="left:1px;top:554px;width:1585px;height:1px;background:#c9c2a0;"></div>
<div style="left:1398px;top:558px;width:1px;height:18px;background:#c9c2a0;"></div>
<div style="left:1510px;top:558px;width:1px;height:18px;background:#c9c2a0;"></div>
<span class="t" style="top:560px;left:1261px;transform:scaleX(0.8838);">Проверка справочников</span>
<svg style="left:1388px;top:566px" width="5" height="3"><path d="M0 0h5L2.500 3z" fill="#4a3c14"/></svg>
<span class="t" style="top:560px;left:1423px;transform:scaleX(0.9049);">Новая загрузка</span>
<span class="t" style="top:560px;left:1535px;transform:scaleX(0.8929);">Закрыть</span>
<svg style="left:1243px;top:558px" width="16" height="17" viewBox="0 0 16 17"><path d="M8 3.500c-2.600 0-3.400 2.400-3.400 4.500 0 3-1.200 4.300-2.300 5.200h11.400c-1.100-.9-2.300-2.200-2.300-5.200 0-2.100-.8-4.500-3.400-4.500z" fill="#ee2a1e" stroke="#b01208" stroke-width=".8"/><path d="M6.500 14a1.500 1.500 0 0 0 3 0z" fill="#b01208"/><circle cx="8" cy="3" r="1" fill="#ee2a1e"/><path d="M3.300 5.500q-.6-2.300 1.200-3.800M1.500 6q-1-3.300 2-5.500M12.700 5.500q.6-2.300-1.200-3.800M14.500 6q1-3.300-2-5.500" stroke="#ee2a1e" fill="none" stroke-width=".9"/></svg>
<svg style="left:1405px;top:559px" width="16" height="16" viewBox="0 0 16 16"><defs><radialGradient id="rg" cx=".4" cy=".3" r=".8"><stop offset="0" stop-color="#ffb0a8"/><stop offset="1" stop-color="#e04438"/></radialGradient></defs><circle cx="8" cy="8" r="7" fill="url(#rg)" stroke="#c8a8a0"/><path d="M5 5l6 6M11 5l-6 6" stroke="#fff" stroke-width="2.200"/></svg>
<svg style="left:1519px;top:562px" width="11" height="10" viewBox="0 0 11 10"><path d="M1.200 1l8.600 8M9.800 1L1.200 9" stroke="#2a6cc0" stroke-width="2.700" fill="none"/><path d="M1.500 1.500l8 7M9.500 1.500l-8 7" stroke="#6aa8e8" stroke-width=".8" fill="none"/></svg>
</body></html>
